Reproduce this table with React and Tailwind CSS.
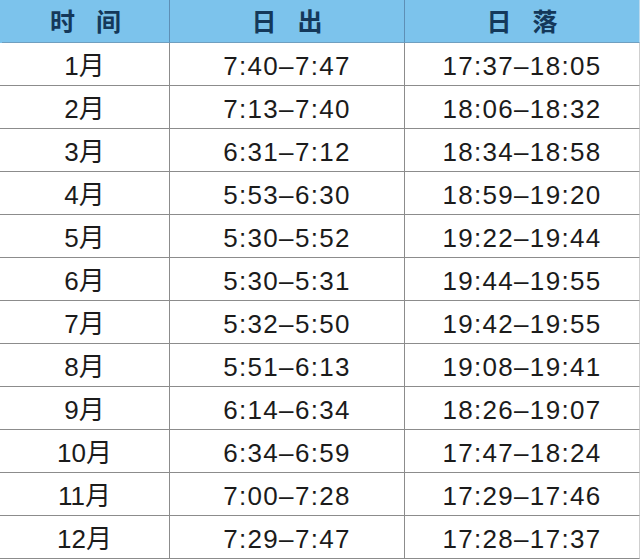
const rows = [
  ['1月', '7:40–7:47', '17:37–18:05'],
  ['2月', '7:13–7:40', '18:06–18:32'],
  ['3月', '6:31–7:12', '18:34–18:58'],
  ['4月', '5:53–6:30', '18:59–19:20'],
  ['5月', '5:30–5:52', '19:22–19:44'],
  ['6月', '5:30–5:31', '19:44–19:55'],
  ['7月', '5:32–5:50', '19:42–19:55'],
  ['8月', '5:51–6:13', '19:08–19:41'],
  ['9月', '6:14–6:34', '18:26–19:07'],
  ['10月', '6:34–6:59', '17:47–18:24'],
  ['11月', '7:00–7:28', '17:29–17:46'],
  ['12月', '7:29–7:47', '17:28–17:37'],
];

function HeadCell({ a, b, last }) {
  return (
    <div
      className={
        'flex items-center justify-center gap-[21px] h-[43px] border-b border-[#6f9fc0] ' +
        (last ? 'border-r border-r-[#b9d9ee]' : 'border-r border-r-[#5e8fb5]')
      }
    >
      <span>{a}</span>
      <span>{b}</span>
    </div>
  );
}

export default function App() {
  return (
    <div className="w-[640px] h-[560px] bg-white overflow-hidden">
      <div className="grid grid-cols-[170px_235px_235px]">
        <div className="contents text-[25px] font-bold text-[#14385a] bg-[#7cc3ec] [font-family:'Noto_Sans_CJK_SC',sans-serif]">
          <div className="bg-[#7cc3ec] pl-[2px]">
            <HeadCell a="时" b="间" />
          </div>
          <div className="bg-[#7cc3ec]">
            <HeadCell a="日" b="出" />
          </div>
          <div className="bg-[#7cc3ec]">
            <HeadCell a="日" b="落" last />
          </div>
        </div>
        {rows.map((r) => (
          <div key={r[0]} className="contents text-[26px] text-[#1b1b1b] [font-family:'Liberation_Sans','Noto_Sans_CJK_SC',sans-serif]">
            <div className="flex items-center justify-center h-[43px] pt-[4px] border-b border-r border-[#8c8c8c]">
              {r[0]}
            </div>
            <div className="flex items-center justify-center h-[43px] pt-[4px] tracking-[1.3px] border-b border-r border-[#8c8c8c]">
              {r[1]}
            </div>
            <div className="flex items-center justify-center h-[43px] pt-[4px] tracking-[1.3px] border-b border-r border-[#8c8c8c] border-r-[#cfcfcf]">
              {r[2]}
            </div>
          </div>
        ))}
      </div>
    </div>
  );
}
